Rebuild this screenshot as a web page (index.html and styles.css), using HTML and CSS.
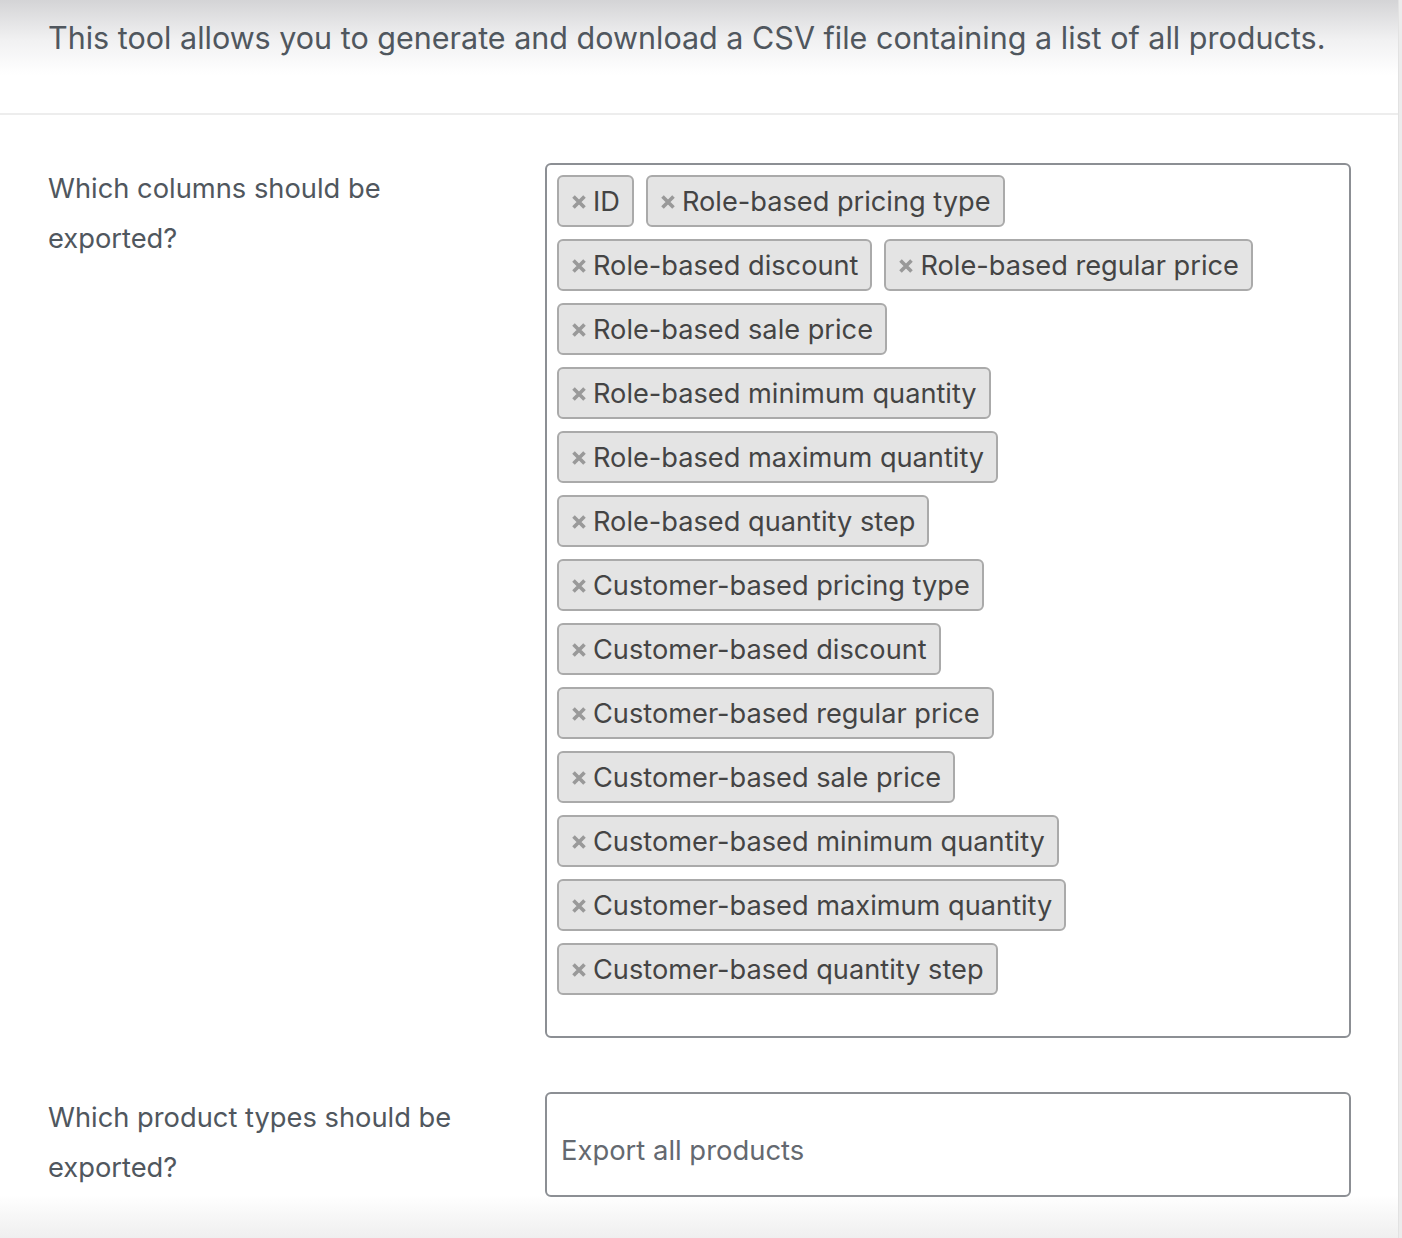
FILE: index.html
```html
<!DOCTYPE html>
<html lang="en">
<head>
    <meta charset="UTF-8">
    <meta name="viewport" content="width=device-width, initial-scale=1.0">
    <title>Export Products</title>
    <link rel="stylesheet" href="styles.css">
</head>
<body>
    <div class="page">
        <div class="intro">
            <p>This tool allows you to generate and download a CSV file containing a list of all products.</p>
        </div>

        <div class="form-table">
            <div class="form-row">
                <label class="form-label">Which columns should be exported?</label>
                <div class="field">
                    <ul class="tags">
                        <li class="tag"><svg class="tag-remove" width="14" height="14" viewBox="0 0 14 14"><path d="M1.5 1.5l11 11M12.5 1.5l-11 11"/></svg>ID</li>
                        <li class="tag"><svg class="tag-remove" width="14" height="14" viewBox="0 0 14 14"><path d="M1.5 1.5l11 11M12.5 1.5l-11 11"/></svg>Role-based pricing type</li>
                        <li class="tag"><svg class="tag-remove" width="14" height="14" viewBox="0 0 14 14"><path d="M1.5 1.5l11 11M12.5 1.5l-11 11"/></svg>Role-based discount</li>
                        <li class="tag"><svg class="tag-remove" width="14" height="14" viewBox="0 0 14 14"><path d="M1.5 1.5l11 11M12.5 1.5l-11 11"/></svg>Role-based regular price</li>
                        <li class="tag"><svg class="tag-remove" width="14" height="14" viewBox="0 0 14 14"><path d="M1.5 1.5l11 11M12.5 1.5l-11 11"/></svg>Role-based sale price</li>
                        <li class="tag"><svg class="tag-remove" width="14" height="14" viewBox="0 0 14 14"><path d="M1.5 1.5l11 11M12.5 1.5l-11 11"/></svg>Role-based minimum quantity</li>
                        <li class="tag"><svg class="tag-remove" width="14" height="14" viewBox="0 0 14 14"><path d="M1.5 1.5l11 11M12.5 1.5l-11 11"/></svg>Role-based maximum quantity</li>
                        <li class="tag"><svg class="tag-remove" width="14" height="14" viewBox="0 0 14 14"><path d="M1.5 1.5l11 11M12.5 1.5l-11 11"/></svg>Role-based quantity step</li>
                        <li class="tag"><svg class="tag-remove" width="14" height="14" viewBox="0 0 14 14"><path d="M1.5 1.5l11 11M12.5 1.5l-11 11"/></svg>Customer-based pricing type</li>
                        <li class="tag"><svg class="tag-remove" width="14" height="14" viewBox="0 0 14 14"><path d="M1.5 1.5l11 11M12.5 1.5l-11 11"/></svg>Customer-based discount</li>
                        <li class="tag"><svg class="tag-remove" width="14" height="14" viewBox="0 0 14 14"><path d="M1.5 1.5l11 11M12.5 1.5l-11 11"/></svg>Customer-based regular price</li>
                        <li class="tag"><svg class="tag-remove" width="14" height="14" viewBox="0 0 14 14"><path d="M1.5 1.5l11 11M12.5 1.5l-11 11"/></svg>Customer-based sale price</li>
                        <li class="tag"><svg class="tag-remove" width="14" height="14" viewBox="0 0 14 14"><path d="M1.5 1.5l11 11M12.5 1.5l-11 11"/></svg>Customer-based minimum quantity</li>
                        <li class="tag"><svg class="tag-remove" width="14" height="14" viewBox="0 0 14 14"><path d="M1.5 1.5l11 11M12.5 1.5l-11 11"/></svg>Customer-based maximum quantity</li>
                        <li class="tag"><svg class="tag-remove" width="14" height="14" viewBox="0 0 14 14"><path d="M1.5 1.5l11 11M12.5 1.5l-11 11"/></svg>Customer-based quantity step</li>
                    </ul>
                </div>
            </div>

            <div class="form-row">
                <label class="form-label">Which product types should be exported?</label>
                <div class="field">
                    <div class="select-single">Export all products</div>
                </div>
            </div>
        </div>
    </div>
</body>
</html>
```

FILE: styles.css
```css
html, body {
    margin: 0;
    height: 100%;
}

body {
    font-family: Inter, "Liberation Sans", Arial, sans-serif;
    background-color: #ececec;
    color: #50575e;
}

.page {
    width: 1399px;
    height: 1238px;
    box-sizing: border-box;
    border-right: 1px solid #e2e2e2;
    background: linear-gradient(to bottom, #d4d4d6 0, #f1f1f2 40px, #ffffff 75px, #ffffff 1195px, #efefef 1238px);
    overflow: hidden;
}

.intro {
    height: 113px;
    border-bottom: 2px solid #ededed;
}

.intro p {
    margin: 0;
    padding: 18px 0 0 48px;
    font-size: 30.5px;
    line-height: 40px;
    color: #50575e;
}

.form-table {
    padding: 48px 0 0 48px;
}

.form-row {
    display: flex;
    margin-bottom: 54px;
}

.form-label {
    width: 497px;
    flex-shrink: 0;
    font-size: 27.3px;
    line-height: 50px;
    margin-top: 1px;
    padding-right: 40px;
    box-sizing: border-box;
    color: #50575e;
}

.field {
    width: 806px;
}

/* tags wrap early, like the select2 box */
.tags {
    list-style: none;
    margin: 0;
    padding: 10px 40px 41px 10px;
    border: 2px solid #8c8f94;
    border-radius: 6px;
    display: flex;
    flex-wrap: wrap;
    align-items: flex-start;
    gap: 12px;
    background: #fff;
}

.tag {
    display: flex;
    align-items: center;
    height: 52px;
    box-sizing: border-box;
    padding: 0 12px 0 13px;
    background-color: #e4e4e4;
    border: 2px solid #aaaaaa;
    border-radius: 6px;
    font-size: 27.2px;
    color: #444444;
    white-space: nowrap;
}

.tag-remove {
    flex-shrink: 0;
    width: 14px;
    height: 14px;
    margin-right: 7px;
    margin-top: 2px;
    fill: none;
    stroke: #999999;
    stroke-width: 3.6;
}

.select-single {
    height: 105px;
    box-sizing: border-box;
    border: 2px solid #8c8f94;
    border-radius: 6px;
    background: #fff;
    display: flex;
    align-items: center;
    padding: 11px 0 0 14px;
    font-size: 27.4px;
    color: #646970;
}
```
